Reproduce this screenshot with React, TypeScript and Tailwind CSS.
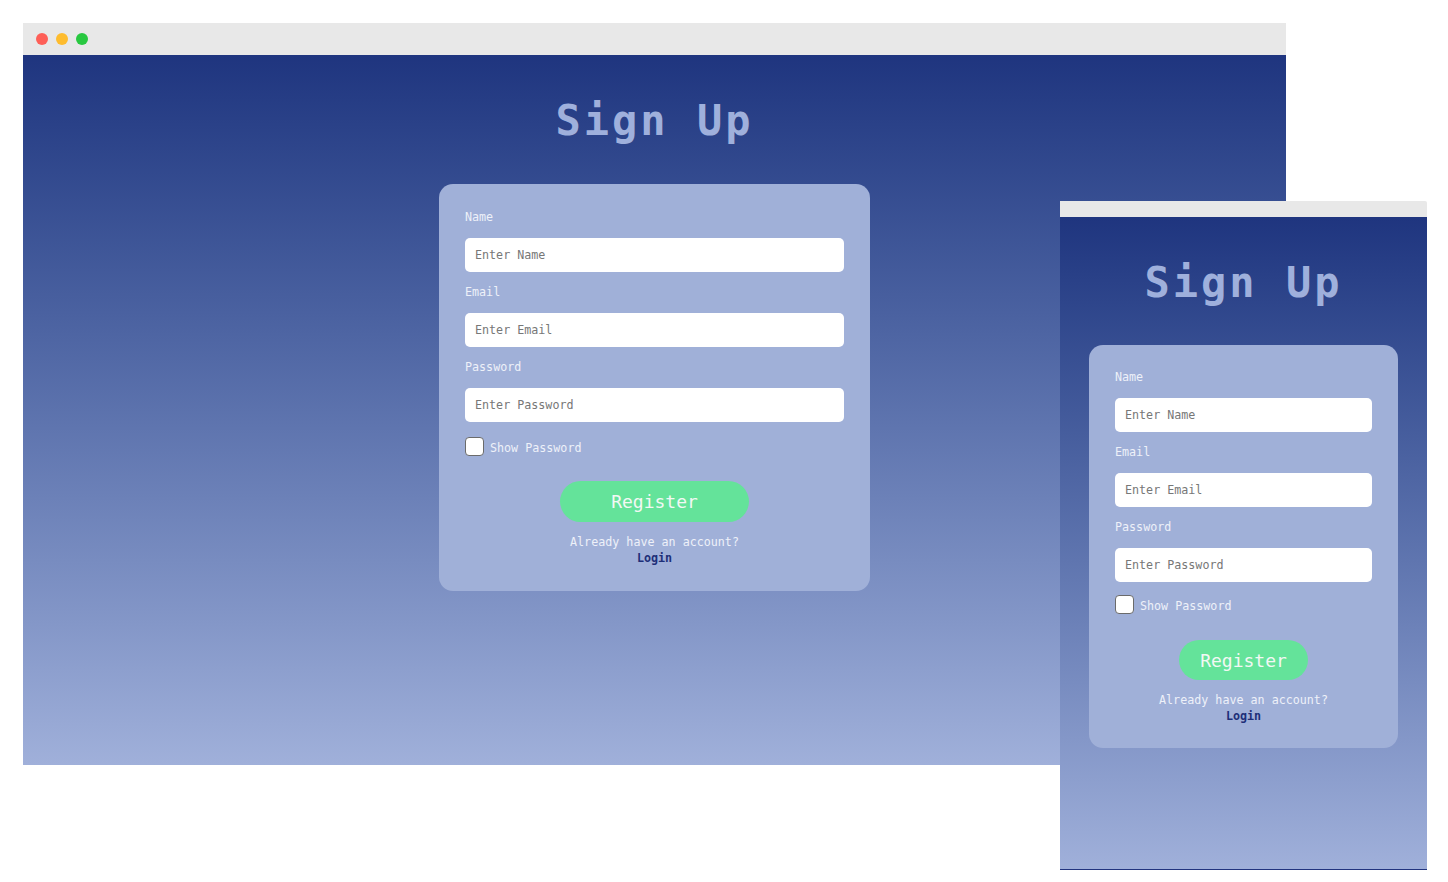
import { useState } from 'react'

const mono = "font-['DejaVu_Sans_Mono',monospace]"

function Field({ label, placeholder, type = 'text' }: { label: string; placeholder: string; type?: string }) {
  return (
    <div className="flex flex-col">
      <label className="text-[11.7px] leading-4 text-[#eef1f9]">{label}</label>
      <input
        type={type}
        placeholder={placeholder}
        className="mt-[13px] h-[34px] w-full rounded-[5px] bg-white px-[10px] text-[11.7px] text-[#333] outline-none placeholder:text-[#777]"
      />
    </div>
  )
}

function SignUpForm({ compact = false }: { compact?: boolean }) {
  const [show, setShow] = useState(false)

  return (
    <div className={`flex h-full flex-col items-center bg-gradient-to-b from-[#1f357f] to-[#a0b0da] ${mono}`}>
      <h1 className="mt-[41px] text-[42px] font-bold leading-[50px] tracking-[3px] text-[#9fb0dc]">Sign Up</h1>

      <form
        className={`flex flex-col rounded-[14px] bg-[#a0b0d8] px-[26px] ${
          compact ? 'mt-[37px] w-[309px] pb-[24px] pt-[24px]' : 'mt-[38px] w-[431px] pb-[25px] pt-[25px]'
        }`}
      >
        <div className="flex flex-col gap-[12px]">
          <Field label="Name" placeholder="Enter Name" />
          <Field label="Email" placeholder="Enter Email" type="email" />
          <Field label="Password" placeholder="Enter Password" type={show ? 'text' : 'password'} />
        </div>

        {/* Show password */}
        <label
          className={`flex items-center gap-[6px] text-[11.7px] leading-4 text-[#eef1f9] ${
            compact ? 'mt-[13px]' : 'mt-[15px]'
          }`}
        >
          <span
            onClick={() => setShow(!show)}
            className="h-[19px] w-[19px] rounded-[4px] border-[1.5px] border-[#6b6b6b] bg-white"
          />
          <span className="mt-[2px]">Show Password</span>
        </label>

        <button
          type="button"
          className={`mx-auto w-1/2 rounded-full bg-[#64e39a] text-[18px] text-[#f2f8f4] ${
            compact ? 'mt-[26px] h-[40px]' : 'mt-[25px] h-[41px]'
          }`}
        >
          Register
        </button>

        <div className="mt-[12px] flex flex-col items-center text-[11.7px] leading-4">
          <span className="text-[#eef1f9]">Already have an account?</span>
          <a href="#" className="font-bold text-[#1e2f78]">Login</a>
        </div>
      </form>
    </div>
  )
}

export default function App() {
  return (
    <div className="relative h-[882px] w-[1448px] overflow-hidden bg-white">
      {/* Desktop window */}
      <div className="absolute left-[23px] top-[23px] flex h-[742px] w-[1263px] flex-col">
        <div className="flex h-[32px] items-center gap-[8px] bg-[#e8e8e8] pl-[13px]">
          <span className="h-[12px] w-[12px] rounded-full bg-[#fe5f57]" />
          <span className="h-[12px] w-[12px] rounded-full bg-[#febc2e]" />
          <span className="h-[12px] w-[12px] rounded-full bg-[#28c840]" />
        </div>
        <div className="flex-1">
          <SignUpForm />
        </div>
      </div>

      {/* Mobile window */}
      <div className="absolute left-[1060px] top-[201px] flex h-[669px] w-[367px] flex-col">
        <div className="h-[16px] rounded-tr-[2px] bg-[#e8e8e8]" />
        <div className="flex-1 border-b border-[#22347f]">
          <SignUpForm compact />
        </div>
      </div>
    </div>
  )
}
